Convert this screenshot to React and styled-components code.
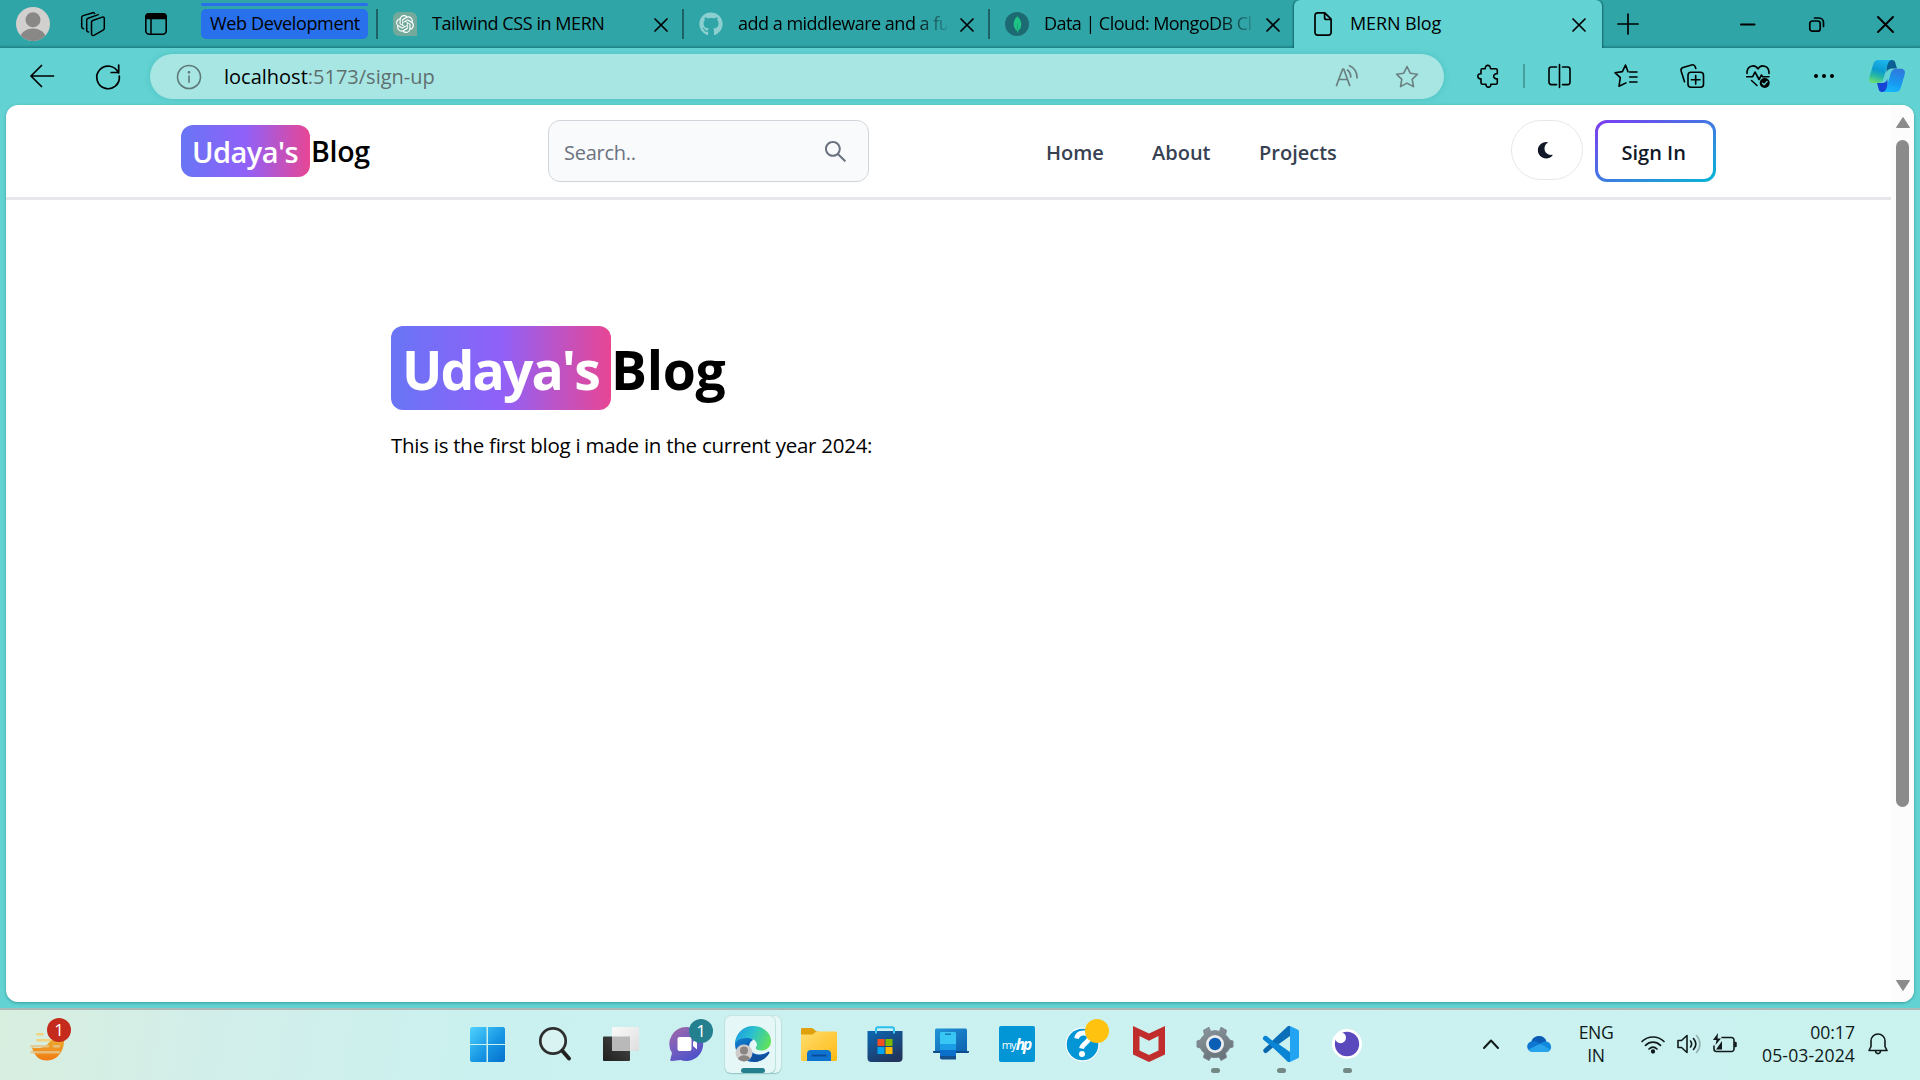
import React from "react";
import styled, { createGlobalStyle, css } from "styled-components";
import { FaGithub, FaMoon } from "react-icons/fa";
import { SiOpenai, SiMongodb } from "react-icons/si";
import { AiOutlineSearch } from "react-icons/ai";

const Global = createGlobalStyle`
  *, *::before, *::after { box-sizing: border-box; }
  body { margin: 0; overflow: hidden; font-family: "Open Sans", "Noto Sans", sans-serif; color: #000; }
  svg { display: block; flex: none; overflow: visible; }
`;

const Desktop = styled.div`
  width: 1920px; height: 1080px; display: flex; flex-direction: column; background: #62d2d2; overflow: hidden;
`;
const Txt = styled.span`
  white-space: pre; line-height: 1.3;
  font-size: ${(p) => p.$size || 18}px;
  font-weight: ${(p) => p.$weight || 400};
  letter-spacing: ${(p) => p.$ls || 0}px;
  color: ${(p) => p.$color || "inherit"};
`;

/* Tab strip */
const TabStrip = styled.header`
  height: 48px; flex: none; display: flex; align-items: stretch;
  background: #30a5a8; box-shadow: inset 0 -1px 0 #22858a, inset 0 -3px 2px -1px rgba(10, 90, 95, 0.35);
`;
const StripTools = styled.div`
  width: 201px; padding-left: 16px; display: flex; align-items: center;
`;
const ToolGap = styled.div`width: ${(p) => p.$w}px; flex: none;`;
const Group = styled.div`
  width: 167px; height: 36px; margin-top: 3px; display: flex; flex-direction: column; justify-content: space-between;
`;
const GroupLine = styled.div`height: 3px; border-radius: 2px; background: #2870ec;`;
const GroupPill = styled.div`
  height: 30px; border-radius: 5px; background: #2870ec; padding-left: 9px; display: flex; align-items: center;
`;
const Tab = styled.div`
  width: 304px; flex: none; display: flex; align-items: center;
  padding-left: ${(p) => p.$pad || 15}px;
  ${(p) => p.$active && css`
    width: 308px; background: #62d2d2; border-radius: 6px 6px 0 0;
    box-shadow: -1px 0 2px rgba(10, 80, 85, 0.7), 1px 0 2px rgba(10, 80, 85, 0.7);
    clip-path: inset(0 -4px 0 -4px);
  `}
`;
const Divider = styled.div`
  width: 2px; height: ${(p) => p.$h || 30}px; background: ${(p) => p.$c || "#1d6266"}; flex: none; align-self: center;
`;
const TabTitle = styled.div`
  width: ${(p) => p.$w}px; margin-left: ${(p) => p.$ml}px; display: flex; flex: none;
  ${(p) => p.$fade && css`mask-image: linear-gradient(90deg, #000 calc(100% - 34px), rgba(0, 0, 0, 0.15) 100%);`}
`;
const TabClose = styled.div`margin-left: ${(p) => p.$ml}px; padding-top: 2px;`;
const Favicon = styled.div`
  width: 24px; height: 24px; flex: none; display: flex; align-items: center; justify-content: center;
  border-radius: ${(p) => p.$r || 0}; background: ${(p) => p.$bg || "none"}; color: ${(p) => p.$c};
`;
const StripEnd = styled.div`flex: 1; display: flex; align-items: center; padding-left: 16px;`;

/* Toolbar */
const Toolbar = styled.div`
  height: 57px; flex: none; display: flex; align-items: center; padding: 0 0 2px 30px;
`;
const Address = styled.div`
  width: 1294px; height: 45px; margin-top: 2px; border-radius: 23px; background: #a8e6e4; display: flex; align-items: center;
  padding-left: 26px; box-shadow: 0 0 6px rgba(30, 150, 150, 0.28);
`;
const Url = styled.div`width: 1112px; margin-left: 22px; display: flex; flex: none;`;

/* Page */
const Page = styled.main`
  flex: none; width: 1908px; height: 897px; margin-left: 6px; background: #fff; border-radius: 12px;
  overflow: hidden; display: flex; box-shadow: 0 1px 3px rgba(20, 110, 115, 0.55);
`;
const Content = styled.div`flex: 1; display: flex; flex-direction: column;`;
const Nav = styled.nav`
  height: 95px; flex: none; border-bottom: 3px solid #e5e7eb; display: flex; align-items: flex-start; padding: 15px 0 0 175px;
`;
const Brand = styled.div`
  display: flex; align-items: center;
  width: ${(p) => (p.$large ? "auto" : "367px")};
  margin-top: ${(p) => (p.$large ? 0 : 5)}px;
`;
const BrandPill = styled.div`
  width: ${(p) => (p.$large ? 220 : 129)}px; height: ${(p) => (p.$large ? 84 : 52)}px;
  padding-left: ${(p) => (p.$large ? 11 : 11)}px; margin-right: ${(p) => (p.$large ? 0 : 1)}px;
  padding-top: ${(p) => (p.$large ? 4 : 2)}px;
  border-radius: 12px; display: flex; align-items: center; color: #fff;
  background: linear-gradient(90deg, #6875f5, #9061f9 50%, #e74694);
`;
const BrandRest = styled.div`padding-top: ${(p) => (p.$large ? 4 : 2)}px; display: flex;`;
const Search = styled.div`
  width: 321px; height: 62px; border: 1px solid #d1d5db; border-radius: 12px; background: #f9fafb;
  display: flex; align-items: center; justify-content: space-between; padding: 0 19px 0 15px; color: #6b7280;
`;
const SearchHint = styled.div`padding-top: 3px; display: flex;`;
const Links = styled.div`width: 641.5px; height: 62px; padding-left: 177px; display: flex; align-items: center;`;
const LinkItem = styled.a`width: ${(p) => p.$w}px; color: #374151; padding-top: 3px; display: flex;`;
const Toggle = styled.button`
  width: 72px; height: 60px; padding: 0 2px 0 0; border: 1px solid #e5e7eb; border-radius: 30px; background: #fff; color: #111827;
  display: flex; align-items: center; justify-content: center;
`;
const SignIn = styled.button`
  width: 121px; height: 62px; margin-left: 12px; padding: 3px; border: 0; border-radius: 12px; font-family: inherit;
  background: linear-gradient(to bottom right, #7e3af2, #06b6d4); display: flex;
`;
const SignInFace = styled.span`
  flex: 1; height: 100%; background: #fff; border-radius: 9px; display: flex; align-items: center; padding: 3px 0 0 24px; color: #111827;
`;
const Hero = styled.section`padding: 126px 0 0 385px; display: flex; flex-direction: column;`;
const Lead = styled.p`margin: 22px 0 0; display: flex;`;
const Scroll = styled.div`
  width: 23px; background: #fcfcfc; display: flex; flex-direction: column; align-items: center; padding: 12px 0 11px;
`;
const Thumb = styled.div`width: 13px; height: 667px; margin: 12px 0 auto; border-radius: 7px; background: #8b8b8b;`;

/* Taskbar */
const Taskbar = styled.footer`
  height: 72px; margin-top: 6px; border-top: 2px solid #a9b9b6; flex: none; display: flex;
  background: linear-gradient(100deg, #d8eedf 0, #d2eeea 220px, #caf1ef 480px, #cbf1f0 1500px, #c9f2ee 1920px);
`;
const Widgets = styled.div`width: 456px; padding: 21px 0 0 30px;`;
const WidgetButton = styled.div`position: relative; width: 44px;`;
const Apps = styled.div`width: 924px; display: flex;`;
const AppButton = styled.div`
  width: 66px; display: flex; align-items: center; justify-content: center; position: relative;
  padding: 0 ${(p) => p.$nudge || 0}px 2px 0;
`;
const Badge = styled.span`
  position: absolute; left: ${(p) => p.$x}px; top: ${(p) => p.$y}px; width: 24px; height: 24px; border-radius: 50%;
  background: ${(p) => p.$bg}; color: #fff; display: flex; align-items: center; justify-content: center;
`;
const Running = styled.span`
  position: absolute; bottom: 7px; left: calc(50% - ${(p) => (p.$active ? 12 : 4.5)}px);
  width: ${(p) => (p.$active ? 24 : 9)}px; height: 5px; border-radius: 3px; background: ${(p) => (p.$active ? "#24808f" : "#748886")};
`;
const ActiveBack = styled.span`
  position: absolute; left: 5px; top: 6px; width: 50px; height: 57px; border-radius: 6px; background: #e6f7f7;
  box-shadow: 0 1px 1px rgba(80, 150, 150, 0.4), 0 0 0 1px #c2e6e4;
`;
const ActiveBehind = styled(ActiveBack)`left: 11px;`;
const Layer = styled.span`position: relative; display: flex;`;
const HpTile = styled.div`
  width: 36px; height: 36px; border-radius: 2px; background: #0296d6; color: #fff; display: flex; align-items: center; justify-content: center;
  font-size: 11px; letter-spacing: -0.8px;
  b { font-size: 15.5px; font-style: italic; letter-spacing: -2px; padding-right: 2px; }
`;
const Tray = styled.div`flex: 1; display: flex; align-items: center; padding: 0 0 2px 103px; color: #101a1a;`;
const Stack = styled.div`
  width: ${(p) => p.$w}px; display: flex; flex-direction: column; align-items: ${(p) => p.$align};
  margin-left: ${(p) => p.$ml}px; flex: none;
`;

const Line = ({ w = 24, h = 24, vb, sw = 1.6, c = "currentColor", children }) => (
  <svg width={w} height={h} viewBox={vb || `0 0 ${w} ${h}`} fill="none" stroke={c} strokeWidth={sw} strokeLinecap="round" strokeLinejoin="round">{children}</svg>
);
const Cross = ({ s = 12, sw = 1.7 }) => <Line w={s} h={s} sw={sw}><path d={`M0 0 ${s} ${s}M${s} 0 0 ${s}`} /></Line>;

const Person = () => (
  <svg width="34" height="34" viewBox="0 0 34 34">
    <defs><clipPath id="pc"><circle cx="17" cy="17" r="17" /></clipPath></defs>
    <circle cx="17" cy="17" r="17" fill="#d2d0ce" />
    <g clipPath="url(#pc)" fill="#8a8886"><circle cx="17" cy="12.7" r="7.5" /><ellipse cx="17" cy="32" rx="13" ry="10.5" /></g>
  </svg>
);
const Workspaces = () => (
  <Line sw={1.5}>
    <path d="M10.5 10.2c0-.8.4-1.3 1.2-1.7l9.600-3.400c1.100-.4 2 .1 2 1.200v10c0 .9-.4 1.500-1.200 1.900l-8.700 4.900c-1.500.8-2.900.2-2.900-1.300z" />
    <path d="M7.500 20c-1.200-.2-1.800-1-1.800-2.100V8.300c0-1 .5-1.600 1.400-2L17.300 2.600" />
    <path d="M2.500 16.800C1.200 16.400.700 15.800.700 14.700V5.600c0-1 .5-1.600 1.400-2L12 .8c.8-.2 1.300 0 1.600.700" />
  </Line>
);
const TabActions = () => (
  <svg width="22" height="22" viewBox="0 0 22 22" fill="none">
    <rect x=".8" y=".8" width="20.400" height="20.400" rx="3.500" stroke="#000" strokeWidth="1.600" />
    <path d="M0 6.200V4a4 4 0 0 1 4-4h14a4 4 0 0 1 4 4v2.200z" fill="#000" /><path d="M6 6v15" stroke="#000" strokeWidth="1.500" />
  </svg>
);
const FileIcon = () => <Line w={18} h={24} sw={1.700}><path d="M3.500.9h7.300l6.300 6.300v13.400a2.500 2.500 0 0 1-2.500 2.500H3.500A2.500 2.500 0 0 1 1 20.600V3.400A2.500 2.500 0 0 1 3.500.9zM10.600 1v4.500a2 2 0 0 0 2 2H17" /></Line>;
const StarPath = "M12 1.500l3.200 6.700 7.300 1-5.300 5.100 1.300 7.300-6.500-3.500-6.500 3.500 1.300-7.300L1.500 9.200l7.300-1z";

const Puzzle = () => <Line w={22} h={24} sw={1.600}><path d="M5.200 4.700h3.100c-.7-4.500 5.700-4.500 5.100 0h5.300c1 0 1.600.6 1.600 1.600v3.500c-4.800-1-4.800 5.800 0 5v3.900c0 1-.6 1.600-1.600 1.600h-4.900c.5 3.800-5.300 3.800-4.800 0H5.600c-1 0-1.600-.6-1.600-1.600v-3.900c-4.200.6-4.200-5.800 0-5V6.300c0-1 .4-1.600 1.200-1.600z" /></Line>;
const Split = () => <Line w={23} sw={1.600}><path d="M8.500 3H3.300A2.300 2.300 0 0 0 1 5.300v13A2.300 2.300 0 0 0 3.300 20.600h5.200M14.500 3h5.200A2.300 2.300 0 0 1 22 5.300v13a2.300 2.300 0 0 1-2.300 2.300h-5.200M11.500.5v23" /></Line>;
const Favorites = () => <Line sw={1.600}><path d="M14 7.700 11.500 1 8.400 7.600 1 8.700l5.300 5-1.300 8.600 7-3.400M15.700 8H23M15.700 13H23M15.700 18H23" /></Line>;
const Collections = () => <Line sw={1.600}><rect x="8" y="8.200" width="15.500" height="15" rx="3" /><path d="M15.700 11.500v8.600M11.400 15.800H20M4.500 17.800 1.200 7.300C.6 5.300 1.200 4.100 3 3.500L11.600 1c2-.6 3.100 0 3.700 1.900l.5 1.600" /></Line>;
const Heart = () => (
  <Line sw={1.600}>
    <path d="M1 9.500C.6 1.200 9.200-.3 12 5 14.800-.3 23.400 1.200 23 9.500M.7 12.700h6L9 8l4 7.500L15.500 11l1 1.700H23M5.500 16.500 11 21.500" />
    <circle cx="18.700" cy="19" r="5" fill="#000" stroke="none" /><path d="m16.500 19.200 1.600 1.500 3-3.200" stroke="#62d2d2" strokeWidth="1.300" />
  </Line>
);
const Copilot = () => (
  <svg width="36" height="32" viewBox="0 0 36 32">
    <defs>
      <linearGradient id="c1" x1=".6" y1="0" x2=".3" y2="1"><stop stopColor="#1db4ee" /><stop offset=".45" stopColor="#0b9bd0" /><stop offset=".7" stopColor="#25b6a6" /><stop offset="1" stopColor="#68dd74" /></linearGradient>
      <linearGradient id="c2" x1=".7" y1="0" x2=".4" y2="1"><stop stopColor="#3078dc" /><stop offset=".6" stopColor="#1798f0" /><stop offset="1" stopColor="#16b8fb" /></linearGradient>
    </defs>
    <path d="M17 0h6c2 0 2.800 1 3.300 2.700L28 8.600h-5c-2.500 0-4.500 1-5.300 4z" fill="#0c5f92" />
    <path d="M19 32h-6c-2 0-2.800-1-3.300-2.700L8 23h5c2.500 0 4.500-1 5.300-4z" fill="#1743d6" />
    <path d="M9 0h13.500c-2.200.6-3.200 2.200-3.900 4.500l-3.800 13c-1.200 4-3 5.500-6.300 5.500H4C.8 23-.6 20.600.3 17.200L4.200 4.500C5.100 1.500 6.500 0 9 0z" fill="url(#c1)" />
    <path d="M27 32H13.800c2.200-.6 3.200-2.200 3.900-4.500l3.700-13.200c1.200-4 3-5.500 6.300-5.500H32c3.200 0 4.600 2.400 3.700 5.800l-3.900 12.900C30.900 30.500 29.500 32 27 32z" fill="url(#c2)" />
  </svg>
);

const WindowsLogo = () => (
  <svg width="35" height="35" viewBox="0 0 35 35">
    <defs><linearGradient id="w1" gradientUnits="userSpaceOnUse" x1="0" y1="0" x2="35" y2="35"><stop stopColor="#50d3ff" /><stop offset=".55" stopColor="#1797e4" /><stop offset="1" stopColor="#0670ce" /></linearGradient></defs>
    <path fill="url(#w1)" d="M1.500 0h15v17H0V1.500zM18 0h15.500L35 1.500V17H18zM0 18h16.500v17h-15L0 33.500zM18 18h17v15.500L33.500 35H18z" />
  </svg>
);
const SearchLogo = () => (
  <svg width="32" height="34" viewBox="0 0 32 34" fill="none"><circle cx="14" cy="14" r="12.700" stroke="#2e2e2e" strokeWidth="2.700" fill="#d9f3f3" /><path d="m23.500 24 6.500 7.500" stroke="#222" strokeWidth="4" strokeLinecap="round" /></svg>
);
const TaskView = () => (
  <svg width="36" height="34" viewBox="0 0 36 34">
    <defs>
      <linearGradient id="tv" x1="1" y1="0" x2="0" y2="1"><stop stopColor="#4a4a4a" /><stop offset="1" stopColor="#1f1f1f" /></linearGradient>
      <linearGradient id="tw" x1="0" y1="0" x2="1" y2="1"><stop stopColor="#fafafa" /><stop offset="1" stopColor="#dedede" /></linearGradient>
    </defs>
    <rect y="9.500" width="27" height="24.500" rx="1" fill="url(#tv)" /><rect x="9" y="0" width="27" height="24" rx="1" fill="url(#tw)" /><path d="M9 9.500h18V24H10a1 1 0 0 1-1-1z" fill="#b9b9b9" />
  </svg>
);
const Chat = () => (
  <svg width="34" height="34" viewBox="0 0 34 34">
    <defs><linearGradient id="ch" x1="0" y1="0" x2=".6" y2="1"><stop stopColor="#a269a4" /><stop offset=".5" stopColor="#7a5fbe" /><stop offset="1" stopColor="#4f52c8" /></linearGradient></defs>
    <path d="M17 0a17 17 0 1 1-6.500 33L2 34c-1.200.2-2-.5-1.600-1.800L2 26A17 17 0 0 1 17 0z" fill="url(#ch)" />
    <rect x="7.500" y="10" width="14" height="14" rx="2" fill="#fff" /><path d="m23 15 4-3.500v11L23 19z" fill="#fff" />
  </svg>
);
const Edge = () => (
  <svg width="36" height="36" viewBox="0 0 36 36">
    <defs>
      <linearGradient id="e1" x1="0" y1=".3" x2="1" y2=".6"><stop stopColor="#1c9de2" /><stop offset=".45" stopColor="#2bc1cd" /><stop offset="1" stopColor="#62e35a" /></linearGradient>
      <linearGradient id="e2" x1="0" y1="0" x2=".5" y2="1"><stop stopColor="#127cc8" /><stop offset="1" stopColor="#0a5fb8" /></linearGradient>
    </defs>
    <path d="M0 18C0 12 6 9 12 10c3 .5 5 2 6 4-4 2-5 7-2.500 10.500C19 29 26 30 33 26c1-.5 1.700.2 1.200 1C31 32.500 25.500 36 19 36 8 36 0 28 0 18z" fill="url(#e2)" />
    <path d="M14.500 15c-4 6 0 14 9 14.500 3.500.2 6.500-.8 9.500-3.500 1-.5 1.700.2 1.200 1C31 32.500 25.500 36 19.500 36 10 33 8 20 14.500 15z" fill="#114f9f" />
    <path d="M0 18C.5 7 8.500 0 18 0c11 0 18 7.500 18 15 0 6-4.500 9.500-9.500 9.500-4.500 0-6.500-1.500-5.500-3.300 3-4-1.500-9-8.500-9.200C6.500 12 1.500 14 0 18z" fill="url(#e1)" />
    <circle cx="9" cy="27" r="8.500" fill="#cfcccb" /><circle cx="9" cy="24.600" r="4" fill="#8a8583" /><path d="M3 33c1-5 11-5 12 0-3.500 3.300-8.500 3.300-12 0z" fill="#8a8583" />
  </svg>
);
const Folder = () => (
  <svg width="36" height="33" viewBox="0 0 36 33">
    <defs><linearGradient id="f1" x1="0" y1="0" x2="1" y2="1"><stop stopColor="#ffdc70" /><stop offset="1" stopColor="#fdbb12" /></linearGradient></defs>
    <path d="M0 1.500C0 .6.600 0 1.500 0h9.300l1.800 1L15.500 3.500H18V9H0z" fill="#e0a00c" />
    <path d="M0 6.500h11.500L15.300 3.500h19.200c.9 0 1.500.6 1.500 1.500v26.500c0 .9-.6 1.500-1.500 1.500h-33C.6 33 0 32.400 0 31.500z" fill="url(#f1)" />
    <path d="M6 33v-7a4 4 0 0 1 4-4h16a4 4 0 0 1 4 4v7z" fill="#0f74cf" /><path d="M10.500 27.500h15" stroke="#0a4c9c" strokeWidth="2" />
  </svg>
);
const Store = () => (
  <svg width="36" height="36" viewBox="0 0 36 36">
    <defs><linearGradient id="s1" x1="0" y1="0" x2=".6" y2="1"><stop stopColor="#0c68b4" /><stop offset="1" stopColor="#20365f" /></linearGradient></defs>
    <path d="M9 8V3.500C9 2 9.600 1.200 11 1.200h14c1.400 0 2 .8 2 2.300V8" fill="none" stroke="#2bc0ee" strokeWidth="2" />
    <path d="M.5 5h35v27a4 4 0 0 1-4 4h-27a4 4 0 0 1-4-4z" fill="url(#s1)" /><path d="M9 5v2.500M27 5v2.500" stroke="#42c8f2" strokeWidth="2" />
    <path fill="#f25022" d="M10.500 13h7v7h-7z" /><path fill="#7fba00" d="M18.500 13h7v7h-7z" /><path fill="#00a4ef" d="M10.500 21h7v7h-7z" /><path fill="#ffb900" d="M18.500 21h7v7h-7z" />
  </svg>
);
const PhoneLink = () => (
  <svg width="36" height="32" viewBox="0 0 36 32">
    <defs><linearGradient id="p1" x1="0" y1="0" x2="1" y2="1"><stop stopColor="#2195d8" /><stop offset="1" stopColor="#0d62b0" /></linearGradient></defs>
    <path d="M2 2a1.500 1.500 0 0 1 1.500-1.500h29A1.500 1.500 0 0 1 34 2v21H2z" fill="url(#p1)" /><path d="M0 23h36v.7c0 .8-.5 1.300-1.300 1.300H1.300C.5 25 0 24.500 0 23.700z" fill="#0b4c8c" />
    <path d="M7 5.500C7 4.600 7.600 4 8.500 4h13c.9 0 1.500.6 1.500 1.500V16H7z" fill="#38c6f4" /><path fill="#1a9de4" d="M7 16h16v6H7z" /><path fill="#0a70ca" d="M7 22h16v6H7z" /><path d="M7 28h16v3.500H8.500L7 30.500z" fill="#14508c" /><path d="M12 6.200h6" stroke="#167fb5" strokeWidth="1.600" />
  </svg>
);
const Help = () => (
  <svg width="36" height="36" viewBox="0 0 36 36"><circle cx="17.500" cy="18.500" r="17" fill="#fff" /><circle cx="17.500" cy="18.500" r="15.800" fill="#0296d6" />
    <path d="M11.500 12.500c1-4 4-5.700 7.500-5.500 4 .2 6 3 5 6-1 3.500-6.500 4.500-7.500 9.500" fill="none" stroke="#fff" strokeWidth="4.800" /><circle cx="17" cy="28" r="3" fill="#fff" /></svg>
);
const McAfee = () => <svg width="32" height="36" viewBox="0 0 32 36"><path fillRule="evenodd" fill="#c12c2c" d="M0 0l16 7.500L32 0v28.500L16 36 0 28.500zM6.500 10v14.500L16 29l9.500-4.500V10L16 14.800z" /></svg>;
const Gear = () => (
  <svg width="36" height="36" viewBox="0 0 36 36">
    <defs><linearGradient id="g1" x1="0" y1="0" x2=".5" y2="1"><stop stopColor="#8e979e" /><stop offset="1" stopColor="#68737a" /></linearGradient></defs>
    <path d="M13.500 5.500 12 1.300 6.500 4.300 7.500 9C5.500 10.500 4.300 12 3.500 14L0 15v6l3.500 1c.8 2 2 3.700 4 5L6.500 31.500l5.500 3 2-3.500c2.500.8 5.500.8 8 0l2 3.500 5.500-3L28.500 27c2-1.300 3.200-3 4-5l3.500-1v-6l-3.500-1c-.8-2-2-3.500-4-5L29.500 4.300 24 1.300 22.500 5.500c-3-1-6-1-9 0z" fill="url(#g1)" stroke="#7e888e" strokeWidth="1" strokeLinejoin="round" />
    <circle cx="18" cy="18" r="9" fill="#e9edef" /><circle cx="18" cy="18" r="6.200" fill="#0c5eb4" />
  </svg>
);
const VsCode = () => (
  <svg width="36" height="36" viewBox="0 0 36 36">
    <path d="M2.800 24.500 26 4" stroke="#0a67ae" strokeWidth="5" strokeLinecap="round" />
    <path d="M25 0h2v10L12.500 20.500 9 15z" fill="#0a6fb8" />
    <path d="M2.500 12.300 26 31.500" stroke="#0a84d4" strokeWidth="5" strokeLinecap="round" />
    <path d="M25 36h2V26L14 17l-4 4.500z" fill="#0a84d4" />
    <path d="M27 0l7.500 3.400c1 .5 1.500 1 1.500 2.200v24.800c0 1.200-.5 1.700-1.500 2.200L27 36z" fill="#22a4f3" />
  </svg>
);
const Orb = () => <svg width="30" height="30" viewBox="0 0 30 30"><circle cx="15" cy="15" r="15" fill="#fff" /><circle cx="15" cy="15" r="12.200" fill="#5a48bd" /><circle cx="8.500" cy="8.700" r="5.500" fill="#fff" /></svg>;
const WeatherIcon = () => (
  <svg width="35" height="30" viewBox="0 0 35 30">
    <defs><linearGradient id="sun" x1="0" y1="0" x2="0" y2="1"><stop stopColor="#eab033" /><stop offset="1" stopColor="#f27a12" /></linearGradient></defs>
    <path d="M34 7c1 8-3 22-17 22.500C9.500 29.500 4 25 2 16.500c7 1.500 13 .5 17.500-5.500 2.500-3.500 8-5.500 14.500-4z" fill="url(#sun)" />
    <g stroke="#f3d47c" strokeWidth="2.600" strokeLinecap="round"><path d="M7.500 3.300h5M7.500 9.300h12" /><path d="M1.500 15.300H18M24 15.300h5M1.500 21.300H29" stroke="#e5c78a" opacity=".85" /></g>
  </svg>
);
const Cloud = () => <svg width="24" height="16" viewBox="0 0 24 16"><path d="M4 7C5 2 8 0 12 0c4 0 6.500 2 7.500 5.500L14 10z" fill="#0a5cb5" /><path d="M5 5.200c3-.5 5.500.6 8 2.300L4 15.500C-1 14-1.500 6.500 5 5.200z" fill="#0e75d2" /><path d="M13 8c3-3.500 10-3.500 11 2 .5 3.500-1.500 6-5 6z" fill="#1089dc" /><path d="M1.500 13.500 13 7.700l10 5.500c-.8 1.800-2 2.800-4 2.800H5c-1.500 0-3-1-3.500-2.500z" fill="#27a4ec" /></svg>;

export default function App() {
  return (
    <Desktop>
      <Global />
      <TabStrip>
        <StripTools><Person /><ToolGap $w={31} /><Workspaces /><ToolGap $w={40} /><TabActions /></StripTools>
        <Group><GroupLine /><GroupPill><Txt $ls={-0.36}>Web Development</Txt></GroupPill></Group>
        <ToolGap $w={8} /><Divider />
        <Tab>
          <Favicon $bg="#74aa9c" $r="6px 6px 0 6px" $c="#fff"><SiOpenai size={18} /></Favicon>
          <TabTitle $ml={15} $w={208}><Txt $ls={-0.43}>Tailwind CSS in MERN</Txt></TabTitle>
          <TabClose $ml={15}><Cross /></TabClose>
        </Tab>
        <Divider />
        <Tab>
          <Favicon $c="#8ccfd0"><FaGithub size={24} /></Favicon>
          <TabTitle $ml={15} $w={209} $fade><Txt $ls={-0.5}>add a middleware and a fu</Txt></TabTitle>
          <TabClose $ml={14}><Cross /></TabClose>
        </Tab>
        <Divider />
        <Tab>
          <Favicon $bg="#1c6b72" $r="50%" $c="#1fc585"><SiMongodb size={17} /></Favicon>
          <TabTitle $ml={15} $w={208} $fade><Txt $ls={-0.55}>Data | Cloud: MongoDB Cl</Txt></TabTitle>
          <TabClose $ml={15}><Cross /></TabClose>
        </Tab>
        <Tab $active $pad={20}>
          <FileIcon />
          <TabTitle $ml={18} $w={208}><Txt $ls={-0.12}>MERN Blog</Txt></TabTitle>
          <TabClose $ml={15}><Cross /></TabClose>
        </Tab>
        <StripEnd>
          <Line w={20} h={20} sw={1.700}><path d="M10 0v20M0 10h20" /></Line><ToolGap $w={102} />
          <Line w={15} h={15} sw={2}><path d="M1 7.500h13.500" /></Line><ToolGap $w={54} />
          <Line w={15} h={15} sw={1.700}><rect x=".8" y="4" width="10.400" height="10.200" rx="2.500" /><path d="M5.500 1H10a4.500 4.500 0 0 1 4.500 4.500V9.500" /></Line><ToolGap $w={54} />
          <Cross s={15} sw={2} />
        </StripEnd>
      </TabStrip>

      <Toolbar>
        <Line sw={1.700}><path d="M23.500 12H1M11.500 1.500 1 12l10.500 10.500" /></Line><ToolGap $w={42} />
        <Line sw={1.700}><path d="M22.500 9A11.300 11.300 0 1 0 23.300 12M22.700 1v7.500h-7.500" /></Line><ToolGap $w={30} />
        <Address>
          <Line w={26} h={26} sw={1.600} c="#5d7978"><circle cx="13" cy="13" r="11.500" /><path d="M13 12v6.300" /><circle cx="13" cy="8.300" r=".6" fill="#5d7978" /></Line>
          <Url><Txt $size={20}>localhost</Txt><Txt $size={20} $color="#5f6f6f">:5173/sign-up</Txt></Url>
          <Line w={24} h={24} sw={1.700} c="#6a7f7f"><path d="M.5 20.500 6.700 4h1l6 16.500M2.800 14.500h8.800M11.500 5c2 1.500 3.200 4 3.200 7M13.500.8c4.500 2 7.500 6.200 7.500 12" /></Line>
          <ToolGap $w={35} />
          <Line sw={1.600} c="#6a7f7f"><path d={StarPath} /></Line>
        </Address>
        <ToolGap $w={33} /><Puzzle /><ToolGap $w={24} /><Divider $h={24} $c="#469fa1" /><ToolGap $w={23} /><Split />
        <ToolGap $w={43} /><Favorites /><ToolGap $w={42} /><Collections /><ToolGap $w={42} /><Heart /><ToolGap $w={43} />
        <svg width="22" height="4" viewBox="0 0 22 4"><circle cx="3" cy="2" r="2" /><circle cx="11" cy="2" r="2" /><circle cx="19" cy="2" r="2" /></svg>
        <ToolGap $w={34} /><Copilot />
      </Toolbar>

      <Page>
        <Content>
          <Nav>
            <Brand>
              <BrandPill><Txt $size={29} $weight={600} $ls={-0.55}>Udaya's</Txt></BrandPill>
              <BrandRest><Txt $size={28.5} $weight={600} $ls={-0.3}>Blog</Txt></BrandRest>
            </Brand>
            <Search><SearchHint><Txt $size={20} $ls={-0.25}>Search..</Txt></SearchHint><AiOutlineSearch size={27} /></Search>
            <Links>
              <LinkItem $w={106}><Txt $size={20} $weight={600}>Home</Txt></LinkItem>
              <LinkItem $w={107}><Txt $size={20} $weight={600}>About</Txt></LinkItem>
              <LinkItem $w={90}><Txt $size={20} $weight={600}>Projects</Txt></LinkItem>
            </Links>
            <Toggle><FaMoon size={16.5} /></Toggle>
            <SignIn><SignInFace><Txt $size={20} $weight={600}>Sign In</Txt></SignInFace></SignIn>
          </Nav>
          <Hero>
            <Brand $large>
              <BrandPill $large><Txt $size={53.5} $weight={700} $ls={-1.9}>Udaya's</Txt></BrandPill>
              <BrandRest $large><Txt $size={53.5} $weight={700} $ls={-0.3}>Blog</Txt></BrandRest>
            </Brand>
            <Lead><Txt $size={20.5} $ls={-0.26}>This is the first blog i made in the current year 2024:</Txt></Lead>
          </Hero>
        </Content>
        <Scroll>
          <svg width="14" height="11" viewBox="0 0 14 11"><path d="M7 0.500 13.500 10.500H.5z" fill="#8b8b8b" stroke="#8b8b8b" strokeLinejoin="round" /></svg>
          <Thumb />
          <svg width="14" height="11" viewBox="0 0 14 11"><path d="M7 10.500 13.500.5H.5z" fill="#8b8b8b" stroke="#8b8b8b" strokeLinejoin="round" /></svg>
        </Scroll>
      </Page>

      <Taskbar>
        <Widgets><WidgetButton><WeatherIcon /><Badge $x={17} $y={-13} $bg="#c42b1c"><Txt $size={17}>1</Txt></Badge></WidgetButton></Widgets>
        <Apps>
          <AppButton $nudge={3}><WindowsLogo /></AppButton>
          <AppButton><SearchLogo /></AppButton>
          <AppButton><TaskView /></AppButton>
          <AppButton><Chat /><Badge $x={35} $y={9} $bg="#24808f"><Txt $size={17}>1</Txt></Badge></AppButton>
          <AppButton><ActiveBehind /><ActiveBack /><Layer><Edge /></Layer><Running $active /></AppButton>
          <AppButton><Folder /></AppButton>
          <AppButton><Store /></AppButton>
          <AppButton><PhoneLink /></AppButton>
          <AppButton><HpTile>my<b>hp</b></HpTile></AppButton>
          <AppButton><Help /><Badge $x={35} $y={9} $bg="#ffc20e" /></AppButton>
          <AppButton><McAfee /></AppButton>
          <AppButton><Gear /><Running /></AppButton>
          <AppButton><VsCode /><Running /></AppButton>
          <AppButton><Orb /><Running /></AppButton>
        </Apps>
        <Tray>
          <Line w={16} h={10} sw={2}><path d="M1 9l7-7.500L15 9" /></Line><ToolGap $w={28} /><Cloud />
          <Stack $w={60} $ml={15} $align="center"><Txt $size={17.6} $ls={-0.4}>ENG</Txt><Txt $size={17.6} $ls={-0.4}>IN</Txt></Stack>
          <ToolGap $w={15} />
          <Line w={24} h={18} sw={1.700}><path d="M1 6.500C7 .5 17 .5 23 6.500M4.500 10.300c4.300-4.300 10.700-4.300 15 0M8 14c2.500-2.500 5.500-2.500 8 0" /><circle cx="12" cy="16.500" r="1.300" fill="currentColor" /></Line>
          <ToolGap $w={12} />
          <Line w={24} h={20} sw={1.600}><path d="M1 6.500h3.500L10 1.500v17l-5.500-5H1zM13.500 7c1.500 2 1.500 4 0 6M16.500 4.500c3 3.500 3 7.500 0 11" /><path d="M19.500 1.500c4.500 5 4.500 12 0 17" opacity=".3" /></Line>
          <ToolGap $w={12} />
          <Line w={24} h={20} sw={1.600}><path d="M9 3.500h9.500A2.500 2.500 0 0 1 21 6v9a2.500 2.500 0 0 1-2.500 2.500h-15A2.500 2.500 0 0 1 1 15v-3" /><path d="M22.500 9v3" strokeWidth="2.500" /><path d="M5-1 0 6h3.500L2.500 11 8 4.500H4.500zM3 15.500 9 7v8.500z" fill="currentColor" stroke="none" /></Line>
          <Stack $w={111} $ml={7} $align="flex-end"><Txt $size={17.6}>00:17</Txt><Txt $size={17.6} $ls={0.12}>05-03-2024</Txt></Stack>
          <ToolGap $w={13} />
          <Line w={20} h={22} sw={1.600}><path d="M1 17.500 3 13.500V8a7 7 0 0 1 14 0v5.500l2 4zM7.500 18c.5 3.500 4.500 3.500 5 0" /></Line>
        </Tray>
      </Taskbar>
    </Desktop>
  );
}
